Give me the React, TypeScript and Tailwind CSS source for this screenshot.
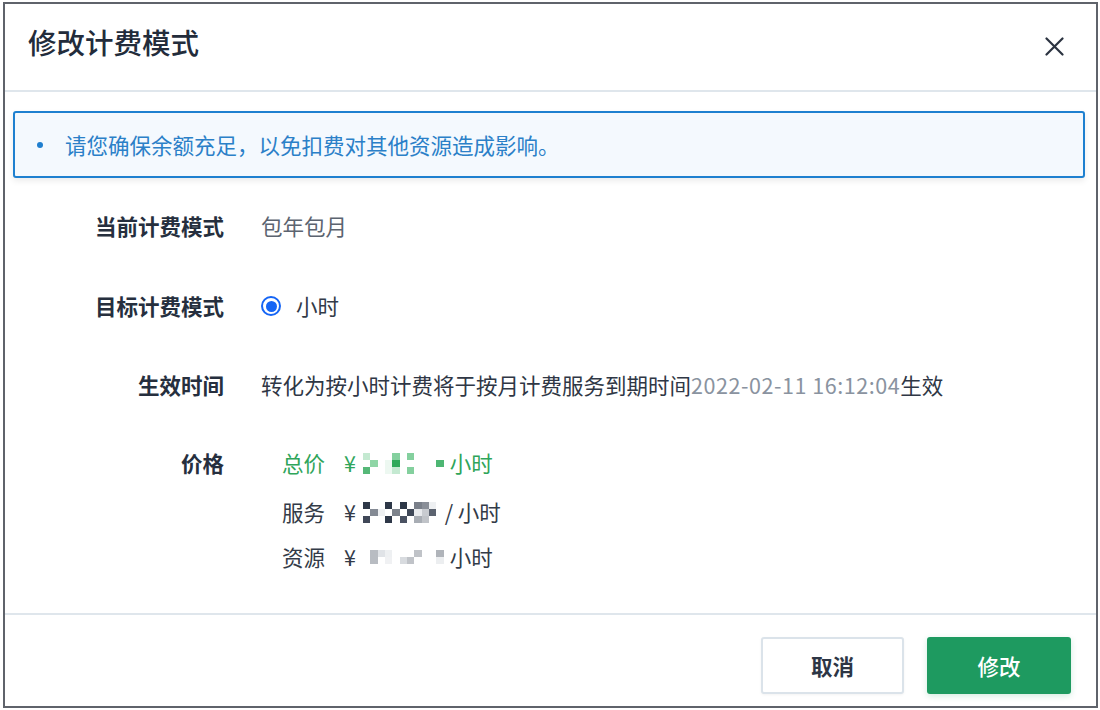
import React from 'react'

const green: Record<string, string> = {
  a: 'bg-[#c4e9d1]',
  b: 'bg-[#84d09e]',
  c: 'bg-[#8fd6a6]',
  d: 'bg-[#2fa95a]',
  e: 'bg-[#56b878]',
  f: 'bg-[#edf8f1]',
  g: 'bg-[#4db673]',
}

const slate: Record<string, string> = {
  a: 'bg-[#2e3848]',
  b: 'bg-[#7a808a]',
  c: 'bg-[#8a8f98]',
  d: 'bg-[#eef0f2]',
  e: 'bg-[#848a94]',
  f: 'bg-[#7d838c]',
  g: 'bg-[#3f4858]',
  h: 'bg-[#e8eaed]',
  i: 'bg-[#c8cbd0]',
  j: 'bg-[#5c6370]',
  k: 'bg-[#404858]',
  l: 'bg-[#4a5262]',
  m: 'bg-[#a8adb4]',
  n: 'bg-[#c0c3c8]',
}

const light: Record<string, string> = {
  a: 'bg-[#b8bcc2]',
  b: 'bg-[#e0e3e7]',
  c: 'bg-[#eef0f2]',
  d: 'bg-[#c0c3c8]',
  e: 'bg-[#b0b4ba]',
  f: 'bg-[#a8adb4]',
  g: 'bg-[#f0f1f3]',
  h: 'bg-[#d8dbdf]',
  i: 'bg-[#eceef0]',
}

// blurred price digits, one char per 7px cell ('.' = empty)
const totalCells = ['a...b.b....', '.c.fd.....g', 'e..fa.b....']
const serviceCells = ['a..a.a.bcd.', '.ed.f.ghij.', 'k..a.l.mn..']
const resourceCells = ['.abc...d..e', '.a.g.hd...i']

function Mosaic({ rows, palette }: { rows: string[]; palette: Record<string, string> }) {
  return (
    <div className="grid grid-cols-[repeat(11,7.33px)] auto-rows-[7px]">
      {rows.flatMap((row, r) =>
        row.split('').map((ch, c) => (
          <div key={`${r}-${c}`} className={ch === '.' ? '' : palette[ch]} />
        ))
      )}
    </div>
  )
}

function Row({ label, children, className = '' }: { label: string; children: React.ReactNode; className?: string }) {
  return (
    <div className={`flex items-start ${className}`}>
      <div className="w-[219px] shrink-0 text-right font-semibold text-[#262f3e]">{label}</div>
      <div className="ml-[37px]">{children}</div>
    </div>
  )
}

export default function App() {
  return (
    <div className="h-[710px] w-[1100px] bg-white pl-[3px] pr-[2px] pt-[2px] pb-[2px] font-['Noto_Sans_CJK_SC','Noto_Sans',sans-serif] text-[21.5px] leading-[28px]">
      <div className="flex h-full flex-col border-2 border-[#5f636b] bg-white">
        {/* header */}
        <div className="flex h-[88px] shrink-0 items-start justify-between border-b-2 border-[#dfe6ec] pl-[23px] pr-[32px] pt-[24px]">
          <h1 className="text-[28.5px] font-medium leading-[28px] text-[#232c3b]">修改计费模式</h1>
          <button className="mt-[9px] text-[#2b3340]">
            <svg width="19" height="19" viewBox="0 0 19 19" fill="none" stroke="currentColor" strokeWidth="2.2" strokeLinecap="round">
              <path d="M1.5 1.5 17.5 17.5M17.5 1.5 1.5 17.5" />
            </svg>
          </button>
        </div>

        {/* body */}
        <div className="flex h-[521px] shrink-0 flex-col">
          <div className="ml-[8px] mr-[11px] mt-[19px] flex h-[67px] items-center rounded-[3px] border-2 border-[#1e80d0] bg-[#f4f9fe] shadow-[0_3px_6px_rgba(0,0,0,0.08)]">
            <span className="ml-[22px] h-[6px] w-[6px] rounded-full bg-[#1f7fcf]" />
            <span className="ml-[22px] text-[#2b80c8]">请您确保余额充足，以免扣费对其他资源造成影响。</span>
          </div>

          <Row label="当前计费模式" className="mt-[34px]">
            <span className="text-[#5c6470]">包年包月</span>
          </Row>

          <Row label="目标计费模式" className="mt-[52px]">
            <label className="flex items-center">
              <span className="flex h-[20px] w-[20px] items-center justify-center rounded-full border-2 border-[#1565f5]">
                <span className="h-[11px] w-[11px] rounded-full bg-[#1565f5]" />
              </span>
              <span className="ml-[15px] text-[#333b48]">小时</span>
            </label>
          </Row>

          <Row label="生效时间" className="mt-[51px]">
            <span className="text-[#2f3745]">
              转化为按小时计费将于按月计费服务到期时间<span className="tracking-[0.55px] text-[#8a93a0]">2022-02-11 16:12:04</span>生效
            </span>
          </Row>

          <Row label="价格" className="mt-[50px]">
            <div className="ml-[21px] flex flex-col">
              <div className="flex h-[28px] items-center text-[#2fa55a]">
                <span>总价</span>
                <span className="ml-[19px] w-[19px]">¥</span>
                <Mosaic rows={totalCells} palette={green} />
                <span className="ml-[6px]">小时</span>
              </div>
              <div className="mt-[21px] flex h-[28px] items-center text-[#333b48]">
                <span>服务</span>
                <span className="ml-[19px] w-[19px]">¥</span>
                <Mosaic rows={serviceCells} palette={slate} />
                <span className="ml-[1px]">/ 小时</span>
              </div>
              <div className="mt-[17px] flex h-[28px] items-center text-[#333b48]">
                <span>资源</span>
                <span className="ml-[19px] w-[19px]">¥</span>
                <Mosaic rows={resourceCells} palette={light} />
                <span className="ml-[6px]">小时</span>
              </div>
            </div>
          </Row>
        </div>

        {/* footer */}
        <div className="flex flex-1 items-start justify-end gap-[23px] border-t-2 border-[#dfe6ec] pr-[25px] pt-[22px]">
          <button className="h-[57px] w-[143px] rounded-[3px] border-2 border-[#dbe3ea] bg-white font-semibold text-[#2d3645] shadow-[0_1px_3px_rgba(0,0,0,0.05)]">
            取消
          </button>
          <button className="h-[57px] w-[144px] rounded-[3px] bg-[#1e9a60] font-medium text-white shadow-[0_2px_6px_rgba(30,154,96,0.2)]">
            修改
          </button>
        </div>
      </div>
    </div>
  )
}
